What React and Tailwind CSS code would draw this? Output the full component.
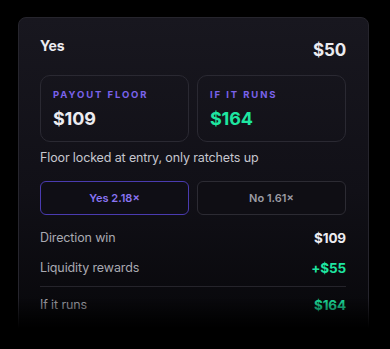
const rows = [
  { label: 'Direction win', value: '$109', tone: 'text-[#ececf1]' },
  { label: 'Liquidity rewards', value: '+$55', tone: 'text-[#1ee6a1]' },
]

function StatBox({ label, value, tone }) {
  return (
    <div className="rounded-[10px] border border-[#2a2932] px-3 pt-3 pb-[10px]">
      <div className="text-[9.5px] font-bold uppercase leading-[14px] tracking-[0.2em] text-[#7a62ea]">{label}</div>
      <div className={`mt-[5px] text-[18px] font-bold leading-6 tracking-[-0.01em] ${tone}`}>{value}</div>
    </div>
  )
}

export default function App() {
  return (
    <div
      className="relative h-[349px] w-[390px] overflow-hidden bg-black pt-[17px]"
      style={{ fontFamily: 'Inter, "Noto Sans", sans-serif' }}
    >
      <div className="ml-[18px] w-[351px] rounded-[8px] border border-[#26252d] bg-gradient-to-b from-[#18171f] via-[#111017] to-[#060608] pt-[18px] pr-[22px] pb-12 pl-[21px]">
        <div className="flex items-start justify-between">
          <span className="text-[14px] font-bold leading-5 tracking-[-0.01em] text-[#ececf1]">Yes</span>
          <span className="mt-[2px] text-[17px] font-bold leading-6 tracking-[-0.01em] text-[#ececf1]">$50</span>
        </div>

        <div className="mt-[13px] grid grid-cols-2 gap-2">
          <StatBox label="Payout floor" value="$109" tone="text-[#ececf1]" />
          <StatBox label="If it runs" value="$164" tone="text-[#1ee6a1]" />
        </div>

        <p className="mt-[8px] text-[12.5px] leading-4 tracking-[-0.01em] text-[#c6c6ce]">
          Floor locked at entry, only ratchets up
        </p>

        <div className="mt-[15px] grid grid-cols-2 gap-2">
          <button className="h-[34px] rounded-[6px] border border-[#4a3bb0] bg-[#0f0e15] text-[11px] font-semibold text-[#8a74f2]">
            Yes 2.18×
          </button>
          <button className="h-[34px] rounded-[6px] border border-[#2c2b33] bg-[#0f0e14] text-[11px] font-semibold text-[#9c9ca4]">
            No 1.61×
          </button>
        </div>

        <div className="mt-[13px] flex flex-col gap-[9.5px]">
          {rows.map((r) => (
            <div key={r.label} className="flex items-center justify-between leading-5">
              <span className="text-[12.5px] tracking-[-0.01em] text-[#a9a9b1]">{r.label}</span>
              <span className={`text-[13.5px] font-bold tracking-[-0.01em] ${r.tone}`}>{r.value}</span>
            </div>
          ))}
        </div>

        <div className="mt-[8px] h-px bg-[#25242b]" />

        <div className="mt-[8px] flex items-center justify-between leading-5">
          <span className="text-[12.5px] tracking-[-0.01em] text-[#a9a9b1]">If it runs</span>
          <span className="text-[13.5px] font-bold tracking-[-0.01em] text-[#1ee6a1]">$164</span>
        </div>
      </div>

      <div className="pointer-events-none absolute inset-x-0 bottom-0 h-[52px] bg-gradient-to-b from-transparent to-black to-60%" />
    </div>
  )
}
